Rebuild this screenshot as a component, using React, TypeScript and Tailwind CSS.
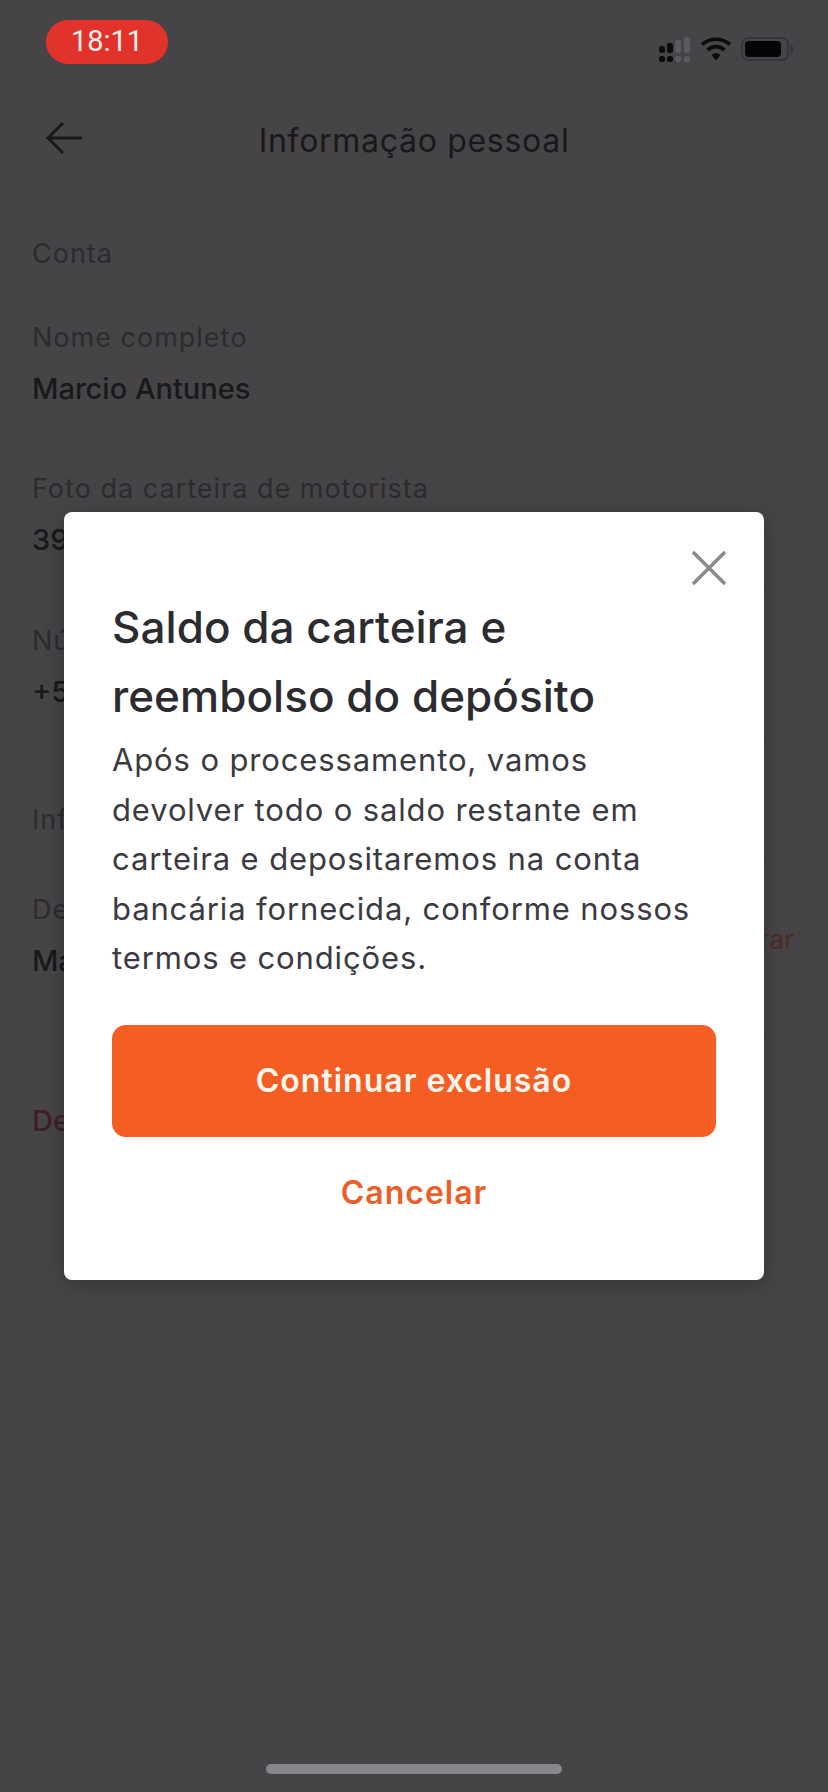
import React from 'react';

const font = "font-['Inter',sans-serif]";

// One label/value row of the page behind the modal
const Field = ({ label, value, action, bottom }: { label: string; value: string; action?: string; bottom: string }) => (
  <div className={`flex flex-col pl-8 pr-[34px] ${bottom}`}>
    <div className="text-[27px] leading-[32px] tracking-[1px] text-[#2c2b2e]">{label}</div>
    <div className="mt-[18px] flex items-start justify-between">
      <span className="text-[29px] font-medium leading-[34px] text-[#19181b]">{value}</span>
      {action && <span className="-mt-[20px] text-[26px] leading-[32px] text-[#4e2a24]">{action}</span>}
    </div>
  </div>
);

const StatusIcons = () => (
  <div className="flex items-center gap-[6px]">
    <svg width="36" height="26" viewBox="0 0 36 26" fill="#0b0b0d">
      <rect x="1" y="10" width="6" height="7" rx="2.5" />
      <rect x="9" y="7" width="6" height="10" rx="2.5" />
      <rect x="17" y="4" width="6" height="13" rx="2.5" fill="#5c5a5e" />
      <rect x="26" y="1" width="6" height="16" rx="2.5" fill="#5c5a5e" />
      <rect x="1" y="20" width="6" height="6" rx="2.5" />
      <rect x="9" y="20" width="6" height="6" rx="2.5" />
      <rect x="17" y="20" width="6" height="6" rx="2.5" fill="#5c5a5e" />
      <rect x="26" y="20" width="6" height="6" rx="2.5" fill="#5c5a5e" />
    </svg>
    <svg width="32" height="26" viewBox="0 0 32 26" fill="none" stroke="#0b0b0d" strokeWidth="3.6">
      <path d="M2 8.5C10 1.5 22 1.5 30 8.5" />
      <path d="M7.5 14C12.5 9.5 19.5 9.5 24.5 14" />
      <path d="M16 24.5L11.5 19C14 16.8 18 16.8 20.5 19Z" fill="#0b0b0d" stroke="none" />
    </svg>
    <div className="ml-[3px] flex items-center">
      <div className="flex h-[24px] w-[48px] items-center rounded-[7px] border-2 border-[#37353a] p-[2px]">
        <div className="h-full w-[36px] rounded-[4px] bg-[#050506]" />
      </div>
      <div className="ml-[1px] h-[8px] w-[3px] rounded-r-sm bg-[#37353a]" />
    </div>
  </div>
);

export default function App() {
  return (
    <div className={`${font} relative h-[1792px] w-[828px] overflow-hidden bg-[#464447]`}>
      {/* Status bar */}
      <div className="flex h-[96px] items-start justify-between pl-[46px] pr-[35px] pt-[20px]">
        <div className="flex h-[44px] w-[122px] items-center justify-center rounded-[22px] bg-[#e1332b] font-['Roboto',sans-serif] text-[29px] text-[#f6f0ee]">
          18:11
        </div>
        <div className="mt-[16px]">
          <StatusIcons />
        </div>
      </div>

      {/* Header */}
      <div className="relative flex h-[90px] items-center justify-center border-b border-[#424043]">
        <svg className="absolute left-[44px] top-[24px]" width="40" height="36" viewBox="0 0 40 36" fill="none" stroke="#19181b" strokeWidth="3">
          <path d="M38 18H4M19 3L4 18L19 33" />
        </svg>
        <span className="text-[32px] leading-[40px] tracking-[0.7px] text-[#19181b]">Informação pessoal</span>
      </div>

      {/* Account section */}
      <div className="h-[106px] border-b border-[#424043] pl-8 pt-[52px] text-[27px] leading-[32px] tracking-[1px] text-[#2c2b2e]">Conta</div>
      <div className="pt-[30px]">
        <Field label="Nome completo" value="Marcio Antunes" bottom="pb-[35px] border-b border-[#424043]" />
      </div>
      <div className="pt-[31px]">
        <Field label="Foto da carteira de motorista" value="39" bottom="pb-[32px] border-b border-[#424043]" />
      </div>
      <div className="pt-[35px]">
        <Field label="Número" value="+5" bottom="pb-[34px] border-b border-[#424043]" />
      </div>

      {/* Personal info section */}
      <div className="border-b border-[#424043] pb-[26px] pl-8 pt-[60px] text-[27px] leading-[32px] tracking-[1px] text-[#2c2b2e]">Informações</div>
      <div className="pt-[31px]">
        <Field label="Depósito" value="Marcio" action="Alterar" bottom="pb-[57px] border-b border-[#424043]" />
      </div>
      <div className="pl-8 pt-[68px] text-[29px] font-medium leading-[34px] text-[#3e1f25]">Desativar</div>

      {/* Home indicator */}
      <div className="absolute bottom-[18px] left-[266px] h-[10px] w-[296px] rounded-full bg-[#88868a]" />

      {/* Modal */}
      <div className="absolute inset-0 flex items-center justify-center">
        <div className="relative h-[768px] w-[700px] rounded-[8px] bg-white px-12 pt-[81px] shadow-[0_4px_20px_rgba(0,0,0,0.25)]">
          <svg className="absolute right-[37px] top-[38px]" width="36" height="36" viewBox="0 0 36 36" fill="none" stroke="#8a8a8a" strokeWidth="3.5">
            <path d="M2 2L34 34M34 2L2 34" />
          </svg>
          <h2 className="text-[44px] font-medium leading-[69px] tracking-[0.05px] text-[#2b2b30]">
            Saldo da carteira e
            <br />
            reembolso do depósito
          </h2>
          <p className="mt-[4px] text-[31px] leading-[49.5px] tracking-[0.87px] text-[#3a3a40]">
            Após o processamento, vamos
            <br />
            devolver todo o saldo restante em
            <br />
            carteira e depositaremos na conta
            <br />
            bancária fornecida, conforme nossos
            <br />
            termos e condições.
          </p>
          <button className="mt-[42px] flex h-[112px] w-full items-center justify-center rounded-[14px] bg-[#f45e22] text-[32px] font-semibold tracking-[1px] text-[#fdf6f0]">
            Continuar exclusão
          </button>
          <div className="mt-[32px] text-center text-[32px] font-semibold tracking-[1px] text-[#ea5f27]">Cancelar</div>
        </div>
      </div>
    </div>
  );
}
